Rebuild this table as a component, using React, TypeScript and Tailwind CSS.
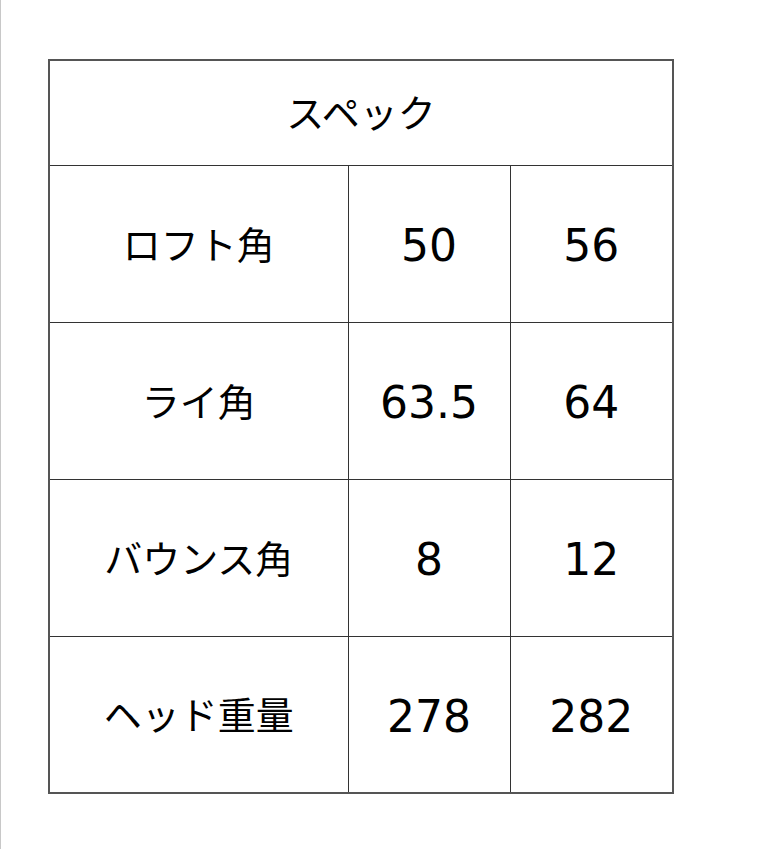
import React from 'react'

interface SpecRow {
  label: string
  a: string
  b: string
}

const rows: SpecRow[] = [
  { label: 'ロフト角', a: '50', b: '56' },
  { label: 'ライ角', a: '63.5', b: '64' },
  { label: 'バウンス角', a: '8', b: '12' },
  { label: 'ヘッド重量', a: '278', b: '282' },
]

const font = { fontFamily: '"DejaVu Sans", "Noto Sans CJK JP", sans-serif' }

const App: React.FC = () => {
  return (
    <div className="min-h-[849px] bg-white border-l border-[#c8c8c8] pl-[47px] pt-[59px]" style={font}>
      <table className="w-[624px] border-collapse border-2 border-[#555] text-black table-fixed">
        <colgroup>
          <col className="w-[299px]" />
          <col className="w-[162px]" />
          <col className="w-[163px]" />
        </colgroup>
        <thead>
          <tr className="h-[105px]">
            <th colSpan={3} className="border border-[#333] font-normal text-[38px] text-center align-middle pt-[4px] p-0">
              スペック
            </th>
          </tr>
        </thead>
        <tbody>
          {rows.map(row => (
            <tr key={row.label} className="h-[157px]">
              <td className="border border-[#333] text-[38px] text-center align-middle pt-[5px]">{row.label}</td>
              <td className="border border-[#333] text-[44px] text-center align-middle pt-[5px]">{row.a}</td>
              <td className="border border-[#333] text-[44px] text-center align-middle pt-[5px]">{row.b}</td>
            </tr>
          ))}
        </tbody>
      </table>
    </div>
  )
}

export default App
